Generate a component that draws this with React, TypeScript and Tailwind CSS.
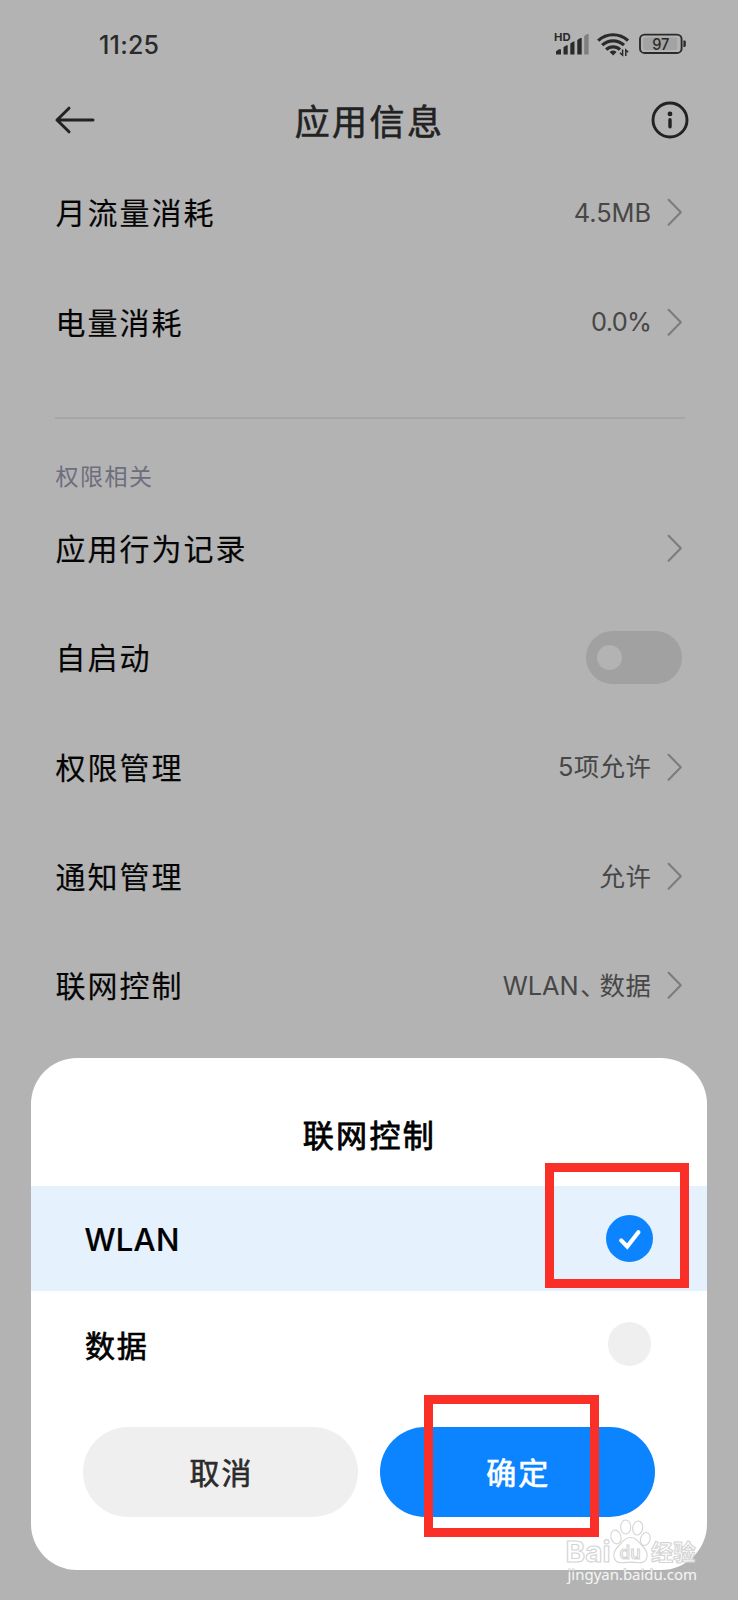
import type { ReactNode } from "react";

function Chevron() {
  return (
    <svg className="ml-4 block h-[30px] w-[16px] shrink-0" viewBox="0 0 16 30" fill="none">
      <path d="M1.6 2.8 L13.8 15.3 L1.6 27.8" stroke="#7c7c7c" strokeWidth="2.1" strokeLinecap="round" strokeLinejoin="round" />
    </svg>
  );
}

function Row({ label, value, children }: { label: string; value?: ReactNode; children?: ReactNode }) {
  return (
    <div className="flex h-[109.4px] items-center justify-between pl-[55.5px] pr-[55.5px]">
      <span className="mt-[2px] text-[30px] leading-[40px] tracking-[2px] text-[#050505] [-webkit-text-stroke:0.15px_#050505]">
        {label}
      </span>
      <div className="flex items-center">
        {value && (
          <span className="-mr-[0.7px] mt-[1.5px] flex text-[25.4px] leading-[36px] text-[#474747]">
            {value}
          </span>
        )}
        {children ?? <Chevron />}
      </div>
    </div>
  );
}

function StatusBar() {
  return (
    <div className="flex h-[88px] items-center justify-between pl-[99px] pr-[52px]">
      <span className="mt-[1px] text-[25px] font-medium leading-[30px] tracking-[0.2px] text-[#2a2a2a]">11:25</span>
      <svg className="block h-[30px] w-[134px]" viewBox="552 29 134 30" fill="none">
        <text x="554" y="41.2" fontSize="11" fontWeight="700" fill="#2a2a2a" textLength="16.6" lengthAdjust="spacingAndGlyphs">
          HD
        </text>
        <g fill="#2a2a2a">
          <path d="M556 51.2l3-1.9h2V54.5h-5z" />
          <path d="M563.5 47.2l3-1.9h1.2V54.5h-4.2z" />
          <path d="M570.3 43.4l3-1.9h1.2V54.5h-4.2z" />
          <path d="M577.3 40l3-1.9h1.4V54.5h-4.4z" />
        </g>
        <path d="M584.2 36l3-1.9h1.4V54.5h-4.4z" fill="#7f7f7f" />
        <g stroke="#2a2a2a" strokeWidth="3.2">
          <path d="M598.2 40.7a21.6 21.6 0 0 1 29.8 0" />
          <path d="M602.2 45.2a15.8 15.8 0 0 1 21.8 0" />
          <path d="M606.2 49.6a10 10 0 0 1 13.8 0" />
        </g>
        <path d="M609.6 52a5.6 5.6 0 0 1 7 0l-3.5 3.4z" fill="#2a2a2a" />
        <path d="M622.6 49.5v5.7l-2.6-2.3M625.8 56v-6l2.4 2.2" stroke="#2a2a2a" strokeWidth="1.5" />
        <rect x="640" y="34.6" width="41.6" height="18.4" rx="4.6" stroke="#2a2a2a" strokeWidth="1.9" />
        <rect x="643.2" y="37.6" width="34" height="12.4" rx="2" fill="#a3a3a3" />
        <path d="M683.4 40.4h1a1.4 1.4 0 0 1 1.4 1.4v3.8a1.4 1.4 0 0 1-1.4 1.4h-1z" fill="#2a2a2a" />
        <text x="652.2" y="49.6" fontSize="15.4" fontWeight="500" fill="#2a2a2a" textLength="17.2" lengthAdjust="spacingAndGlyphs">
          97
        </text>
      </svg>
    </div>
  );
}

function Header() {
  return (
    <div className="flex h-[69.6px] items-center justify-between pb-[5px] pl-[53.5px] pr-[47.5px]">
      <svg className="block h-[30px] w-[42px]" viewBox="0 0 42 30" fill="none">
        <path d="M39 15H3M15 3.2L3 15l12 11.8" stroke="#222" strokeWidth="3" strokeLinecap="round" strokeLinejoin="round" />
      </svg>
      <h1 className="mr-[7px] mt-[3px] text-[35px] font-normal leading-[44px] tracking-[2.4px] text-[#222] [-webkit-text-stroke:0.6px_#222]">
        应用信息
      </h1>
      <svg className="block h-[40px] w-[40px]" viewBox="0 0 40 40" fill="none">
        <circle cx="20" cy="20" r="17" stroke="#222" strokeWidth="2.9" />
        <circle cx="20" cy="13.9" r="2.4" fill="#222" />
        <path d="M20 19.8v7" stroke="#222" strokeWidth="3.4" strokeLinecap="round" />
      </svg>
    </div>
  );
}

function Watermark() {
  return (
    <svg className="absolute left-[560px] top-[1515px] h-[72px] w-[144px]" viewBox="560 1515 144 72">
      <g fill="#fff" fillOpacity="0.85" stroke="#d4d4d4" strokeWidth="1.1">
        <text x="565.5" y="1561.5" fontSize="29" fontWeight="700" textLength="45" lengthAdjust="spacingAndGlyphs">
          Bai
        </text>
        <ellipse cx="616" cy="1537" rx="5" ry="7" transform="rotate(-14 616 1537)" />
        <ellipse cx="625.7" cy="1527" rx="5" ry="7" />
        <ellipse cx="637.7" cy="1528" rx="5" ry="7" transform="rotate(8 637.7 1528)" />
        <ellipse cx="645.3" cy="1539" rx="4.7" ry="6.6" transform="rotate(16 645.3 1539)" />
        <path d="M630.5 1537.5c-6.5 0-8.5 5-12 8.500-4 4-5.500 7-4.500 11.200 1 4.500 5 6 9 5.500 5-.7 10-.7 15 0 4 .5 8-1 9-5.500 1-4.200-.5-7.200-4.500-11.200-3.500-3.500-5.500-8.500-12-8.500z" />
        <text x="619.500" y="1559" fontSize="18" fontWeight="500" textLength="21" lengthAdjust="spacingAndGlyphs">
          du
        </text>
        <text x="651" y="1560" fontSize="22" fontWeight="700" textLength="44.500" lengthAdjust="spacingAndGlyphs">
          经验
        </text>
      </g>
      <text
        x="567.500"
        y="1579.500"
        fontSize="15"
        fill="#f4f4f4"
        stroke="#bcbcbc"
        strokeWidth="1"
        paintOrder="stroke"
        textLength="129.500"
        lengthAdjust="spacingAndGlyphs"
        className="font-['Noto_Sans',sans-serif]"
      >
        jingyan.baidu.com
      </text>
    </svg>
  );
}

function NetworkSheet() {
  return (
    <div className="absolute left-[31.4px] top-[1058.4px] flex h-[511.2px] w-[675.2px] flex-col overflow-hidden rounded-[46px] bg-white">
      <div className="flex h-[128px] items-center justify-center pl-[1px] pt-[27px]">
        <h2 className="text-[31px] font-normal leading-[40px] tracking-[2.4px] text-black [-webkit-text-stroke:0.8px_#000]">
          联网控制
        </h2>
      </div>
      <div className="flex h-[105px] items-center justify-between bg-[#e5f1fd] pl-[53px] pr-[53.5px]">
        <span className="mt-[2.5px] text-[31px] font-medium leading-[40px] tracking-[0.3px] text-black [-webkit-text-stroke:0.2px_#000]">
          WLAN
        </span>
        <svg className="block h-[47px] w-[47px]" viewBox="0 0 47 47" fill="none">
          <circle cx="23.5" cy="23.5" r="23.5" fill="#0d84ff" />
          <path d="M15.2 25.4l6 6.100L32.400 17.200" stroke="#fff" strokeWidth="4.200" strokeLinecap="round" />
        </svg>
      </div>
      <div className="flex h-[105px] items-center justify-between pl-[53.5px] pr-[55.3px]">
        <span className="mt-[4px] text-[30px] leading-[40px] tracking-[1.95px] text-black [-webkit-text-stroke:0.7px_#000]">
          数据
        </span>
        <span className="h-[43.4px] w-[43.4px] rounded-full bg-[#efefef]" />
      </div>
      <div className="flex gap-[22px] pl-[52px] pr-[51.7px] pt-[30.6px]">
        <button className="flex h-[90px] flex-1 items-center justify-center rounded-full bg-[#efefef] pl-[1.5px] pt-[2px] text-[30px] leading-[40px] tracking-[1.95px] text-[#2b2b2b] [-webkit-text-stroke:0.6px_#2b2b2b]">
          取消
        </button>
        <button className="flex h-[90px] flex-1 items-center justify-center rounded-full bg-[#0d84ff] pl-[1.5px] pt-[2px] text-[30px] leading-[40px] tracking-[1.95px] text-white [-webkit-text-stroke:0.7px_#fff]">
          确定
        </button>
      </div>
    </div>
  );
}

export default function App() {
  return (
    <div className="relative h-[1600px] w-[738px] overflow-hidden bg-[#b3b3b3] font-['Inter','Noto_Sans_CJK_SC',sans-serif]">
      <StatusBar />
      <Header />
      <Row label="月流量消耗" value={<span>4.5MB</span>} />
      <Row label="电量消耗" value={<span className="tracking-[-0.7px]">0.0%</span>} />
      <div className="ml-[54.5px] mr-[53.5px] mt-[40.2px] h-[2px] bg-[#a6a6a6]" />
      <div className="flex h-[74.6px] items-end pl-[55.5px]">
        <span className="mb-[0.5px] text-[23px] leading-[32px] tracking-[1.5px] text-[#6d6d7d]">权限相关</span>
      </div>
      <Row label="应用行为记录" />
      <Row label="自启动">
        <span className="mr-[1px] flex h-[53px] w-[96px] items-center rounded-full bg-[#a1a1a1] pl-[11.5px]">
          <span className="h-[25px] w-[25px] rounded-full bg-[#b3b3b3]" />
        </span>
      </Row>
      <Row label="权限管理" value={<span className="tracking-[0.4px]">5项允许</span>} />
      <Row label="通知管理" value={<span className="tracking-[0.4px]">允许</span>} />
      <Row
        label="联网控制"
        value={
          <>
            <span>WLAN</span>
            <span className="ml-[1.5px] tracking-[-6px]">、</span>
            <span className="tracking-[0.4px]">数据</span>
          </>
        }
      />
      <NetworkSheet />
      <div className="absolute left-[545px] top-[1163px] h-[125px] w-[144px] border-[9px] border-[#fa2f28]" />
      <div className="absolute left-[424px] top-[1395px] h-[142px] w-[175px] border-[9px] border-[#fa2f28]" />
      <Watermark />
    </div>
  );
}
